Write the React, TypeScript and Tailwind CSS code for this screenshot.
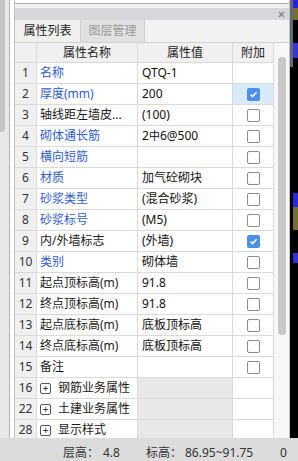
import { ReactNode } from 'react';

type Row = {
  n: number;
  name: string;
  value?: string;
  blue?: boolean;
  check?: 'on' | 'off';
  sel?: boolean;
  group?: boolean;
};

const rows: Row[] = [
  { n: 1, name: '名称', value: 'QTQ-1', blue: true },
  { n: 2, name: '厚度(mm)', value: '200', blue: true, check: 'on', sel: true },
  { n: 3, name: '轴线距左墙皮...', value: '(100)', check: 'off' },
  { n: 4, name: '砌体通长筋', value: 'rebar', blue: true, check: 'off' },
  { n: 5, name: '横向短筋', value: '', blue: true, check: 'off' },
  { n: 6, name: '材质', value: '加气砼砌块', blue: true, check: 'off' },
  { n: 7, name: '砂浆类型', value: '(混合砂浆)', blue: true, check: 'off' },
  { n: 8, name: '砂浆标号', value: '(M5)', blue: true, check: 'off' },
  { n: 9, name: '内/外墙标志', value: '(外墙)', check: 'on' },
  { n: 10, name: '类别', value: '砌体墙', blue: true, check: 'off' },
  { n: 11, name: '起点顶标高(m)', value: '91.8', check: 'off' },
  { n: 12, name: '终点顶标高(m)', value: '91.8', check: 'off' },
  { n: 13, name: '起点底标高(m)', value: '底板顶标高', check: 'off' },
  { n: 14, name: '终点底标高(m)', value: '底板顶标高', check: 'off' },
  { n: 15, name: '备注', value: '', check: 'off' },
  { n: 16, name: '钢筋业务属性', group: true },
  { n: 22, name: '土建业务属性', group: true },
  { n: 28, name: '显示样式', group: true },
];

function Checkbox({ on }: { on: boolean }) {
  if (on) {
    return (
      <span className="w-[13px] h-[13px] rounded-[2px] bg-[#4b8ff0] flex items-center justify-center">
        <svg width="9" height="9" viewBox="0 0 9 9">
          <path d="M1.5 4.6 L3.6 6.6 L7.6 2.3" fill="none" stroke="#fff" strokeWidth="1.6" />
        </svg>
      </span>
    );
  }
  return <span className="w-[13px] h-[13px] rounded-[2px] border border-[#8c8c8c] bg-white" />;
}

function Cell({ children, className = '' }: { children?: ReactNode; className?: string }) {
  return <div className={`h-[21px] border-r border-b border-[#dadada] flex items-center ${className}`}>{children}</div>;
}

function TableRow({ r }: { r: Row }) {
  const nameColor = r.blue ? 'text-[#2f5cd8]' : 'text-[#1a1a1a]';
  return (
    <>
      <Cell className="justify-center bg-[#f0f0f0] text-[#333]">{r.n}</Cell>
      <Cell className={`pl-[3px] bg-white ${nameColor}`}>
        {r.group ? (
          <>
            <span className="w-[11px] h-[11px] border border-[#555] rounded-[2px] flex items-center justify-center text-[10px] leading-none text-[#333] mr-[7px] shrink-0">
              +
            </span>
            <span>{r.name}</span>
          </>
        ) : (
          <span className="whitespace-nowrap">{r.name}</span>
        )}
      </Cell>
      <Cell className={`pl-[4px] whitespace-nowrap text-[#111] ${r.group ? 'bg-[#e8e8e8]' : 'bg-white'}`}>
        {r.value === 'rebar' ? (
          <span>
            2<span className="text-[11px]">中</span>6@500
          </span>
        ) : (
          r.value
        )}
      </Cell>
      <Cell className={`justify-center ${r.sel ? 'bg-[#d9eafc]' : 'bg-white'}`}>
        {r.check && <Checkbox on={r.check === 'on'} />}
      </Cell>
    </>
  );
}

export default function App() {
  return (
    <div className="w-[298px] h-[461px] flex flex-col overflow-hidden bg-[#f0f0f0] text-[12px] font-['Noto_Sans','Noto_Sans_CJK_SC',sans-serif]">
      <div className="flex flex-1 min-h-0">
        {/* left edge: neighbouring pane scrollbar */}
        <div className="w-[9px] bg-[#e8e8e8] flex">
          <div className="w-[5px] h-[132px] bg-[#c4c4c4] rounded-br-[3px]" />
        </div>
        <div className="w-[1px] bg-[#b4b4b4]" />
        <div className="w-[4px] bg-white" />

        {/* property panel */}
        <div className="w-[276px] flex flex-col border-x border-[#c2c2c2] min-h-0">
          <div className="h-[4px] bg-white border-b border-[#acacac]" />
          <div className="h-[4px] bg-[#f0f0f0]" />
          <div className="h-[12px] bg-[#d5d7db] flex items-center justify-end pr-[4px]">
            <svg width="7" height="7" viewBox="0 0 7 7">
              <path d="M1 1 L6 6 M6 1 L1 6" stroke="#8a8a8a" strokeWidth="1.4" />
            </svg>
          </div>
          <div className="h-[23px] bg-[#f2f2f2] border-b border-[#d2d2d2] flex">
            <div className="w-[65px] flex items-center justify-center text-[#222] bg-[#f0f0f0]">属性列表</div>
            <div className="w-[65px] flex items-center justify-center text-[#9a9a9a] bg-[#e1e1e1] border-x border-[#cfcfcf]">
              图层管理
            </div>
          </div>
          <div className="flex flex-1 min-h-0 overflow-hidden">
            <div className="w-[259px] grid grid-cols-[22px_101px_95px_41px] content-start">
              <div className="h-[20px] border-r border-b border-[#dadada] bg-[#f0f0f0]" />
              <div className="h-[20px] border-r border-b border-[#dadada] bg-[#f0f0f0] flex items-center justify-center text-[#222]">属性名称</div>
              <div className="h-[20px] border-r border-b border-[#dadada] bg-[#f0f0f0] flex items-center justify-center text-[#222]">属性值</div>
              <div className="h-[20px] border-r border-b border-[#dadada] bg-[#f0f0f0] flex items-center justify-center text-[#222]">附加</div>
              {rows.map((r) => (
                <TableRow key={r.n} r={r} />
              ))}
            </div>
            <div className="w-[15px] bg-[#f7f7f7] flex flex-col items-center">
              <div className="mt-[14px] w-[8px] h-[278px] rounded-full bg-[#c8c8c8]" />
            </div>
          </div>
        </div>

        {/* right edge: window behind */}
        <div className="w-[8px] flex">
          <div className="w-[3px] flex flex-col">
            <div className="h-[67px] bg-[#616878]" />
            <div className="flex-1 bg-black" />
          </div>
          <div className="flex-1 flex flex-col">
            <div className="h-[8px] bg-[#2424e0]" />
            <div className="h-[12px] bg-[#76702a]" />
            <div className="h-[23px] bg-black" />
            <div className="h-[15px] bg-[#3434d8]" />
            <div className="h-[135px] bg-black" />
            <div className="h-[14px] bg-[#2828e0]" />
            <div className="h-[23px] bg-[#76702a]" />
            <div className="h-[23px] bg-black" />
            <div className="h-[10px] bg-[#3030dc]" />
            <div className="flex-1 bg-black" />
          </div>
        </div>
      </div>

      {/* status bar */}
      <div className="h-[23px] bg-[#dcdcdc] flex items-center text-[12px] text-[#333] whitespace-nowrap pt-[6px]">
        <span className="ml-[63px] w-[40px]">层高：</span>
        <span className="w-[43px]">4.8</span>
        <span className="w-[39px]">标高：</span>
        <span className="w-[95px]">86.95~91.75</span>
        <span>0</span>
      </div>
    </div>
  );
}
